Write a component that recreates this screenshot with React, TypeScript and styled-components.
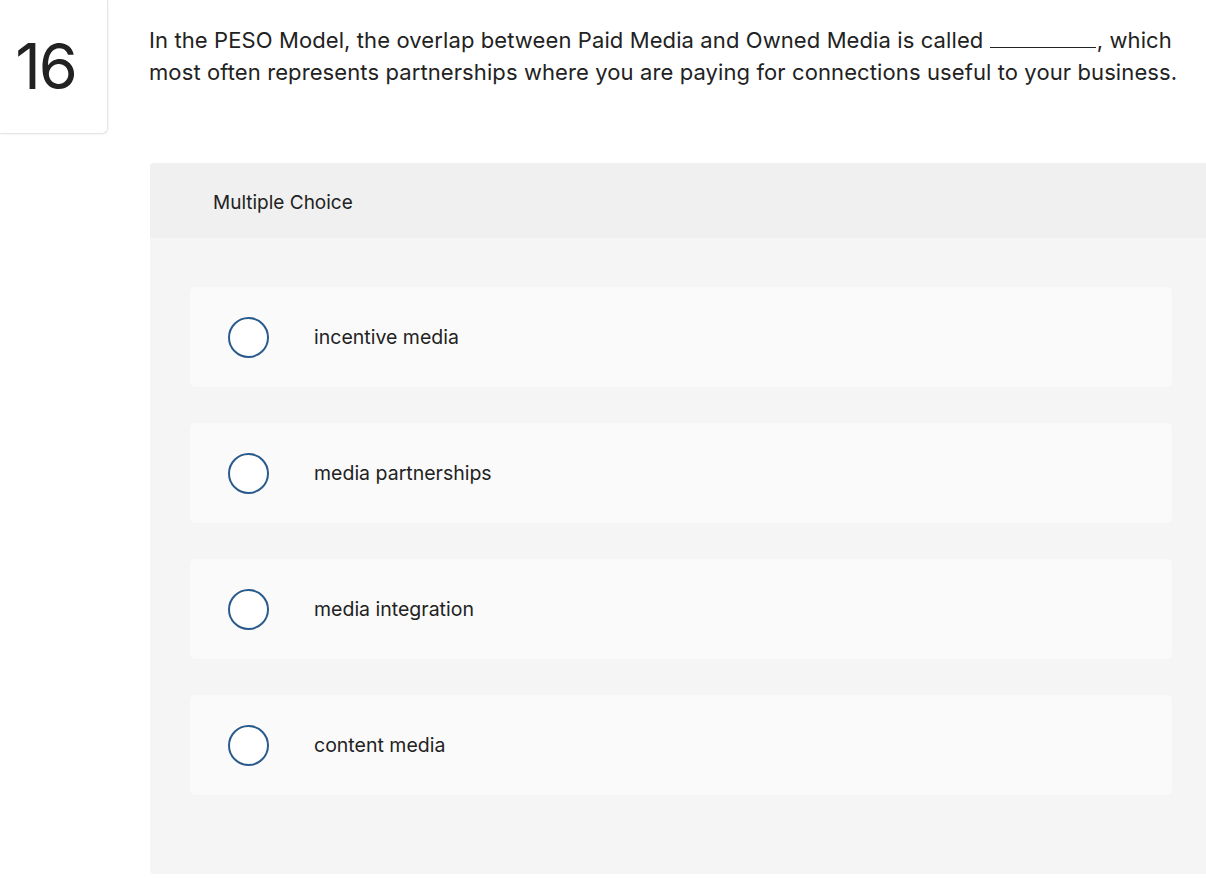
import React from 'react';
import styled, { createGlobalStyle } from 'styled-components';

const GlobalStyle = createGlobalStyle`
    html, body {
        margin: 0;
        padding: 0;
        background: #ffffff;
        overflow: hidden;
    }
    body {
        font-family: 'Inter', 'Noto Sans', sans-serif;
        color: #222222;
    }
`;

const options = [
    { key: 'a', label: 'incentive media' },
    { key: 'b', label: 'media partnerships' },
    { key: 'c', label: 'media integration' },
    { key: 'd', label: 'content media' },
];

const App: React.FC = () => {
    return (
        <>
            <GlobalStyle />
            <Page>
                <QuestionRow>
                    <NumberBox>16</NumberBox>
                    <Prompt>
                        In the PESO Model, the overlap between Paid Media and Owned Media is called <Blank />, which
                        most often represents partnerships where you are paying for connections useful to your
                        business.
                    </Prompt>
                </QuestionRow>

                <ChoicePanel>
                    <PanelHeader>Multiple Choice</PanelHeader>
                    <OptionList>
                        {options.map((option) => (
                            <OptionCard key={option.key}>
                                <Radio />
                                <OptionLabel>{option.label}</OptionLabel>
                            </OptionCard>
                        ))}
                    </OptionList>
                </ChoicePanel>
            </Page>
        </>
    );
};

export default App;

const Page = styled.div`
    width: 1206px;
    height: 894px;
    display: flex;
    flex-direction: column;
`;

const QuestionRow = styled.div`
    display: flex;
    align-items: flex-start;
    gap: 41px;
`;

const NumberBox = styled.div`
    flex: none;
    width: 108px;
    height: 134px;
    display: flex;
    align-items: center;
    justify-content: center;
    padding: 0 16px 2px 0;
    box-sizing: border-box;
    border-right: 1px solid #e4e4e4;
    border-bottom: 1px solid #e4e4e4;
    border-bottom-right-radius: 6px;
    box-shadow: 1px 1px 2px rgba(0, 0, 0, 0.04);
    font-size: 63px;
    font-weight: 400;
    color: #222222;
    letter-spacing: -2px;
`;

const Prompt = styled.p`
    margin: 24px 0 0;
    width: 1052px;
    font-size: 22px;
    line-height: 32px;
    letter-spacing: 0.1px;
    color: #222222;
`;

const Blank = styled.span`
    display: inline-block;
    width: 106px;
    height: 1px;
    margin-right: 1px;
    background: #222222;
    vertical-align: baseline;
`;

const ChoicePanel = styled.section`
    margin: 29px 0 0 150px;
    width: 1062px;
    height: 711px;
    flex: none;
    background: #f5f5f5;
    border-radius: 4px;
    display: flex;
    flex-direction: column;
`;

const PanelHeader = styled.div`
    height: 75px;
    display: flex;
    align-items: center;
    padding: 3px 0 0 63px;
    box-sizing: border-box;
    background: #f0f0f0;
    border-radius: 4px 4px 0 0;
    font-size: 19px;
    color: #222222;
`;

const OptionList = styled.div`
    display: flex;
    flex-direction: column;
    gap: 36px;
    padding: 49px 40px 0;
`;

const OptionCard = styled.div`
    height: 100px;
    display: flex;
    align-items: center;
    padding-left: 38px;
    background: #fafafa;
    border-radius: 5px;
`;

const Radio = styled.span`
    flex: none;
    width: 41px;
    height: 41px;
    box-sizing: border-box;
    border: 2px solid #2b5a8c;
    border-radius: 50%;
    background: #ffffff;
`;

const OptionLabel = styled.span`
    margin-left: 45px;
    font-size: 19.5px;
    color: #222222;
`;
